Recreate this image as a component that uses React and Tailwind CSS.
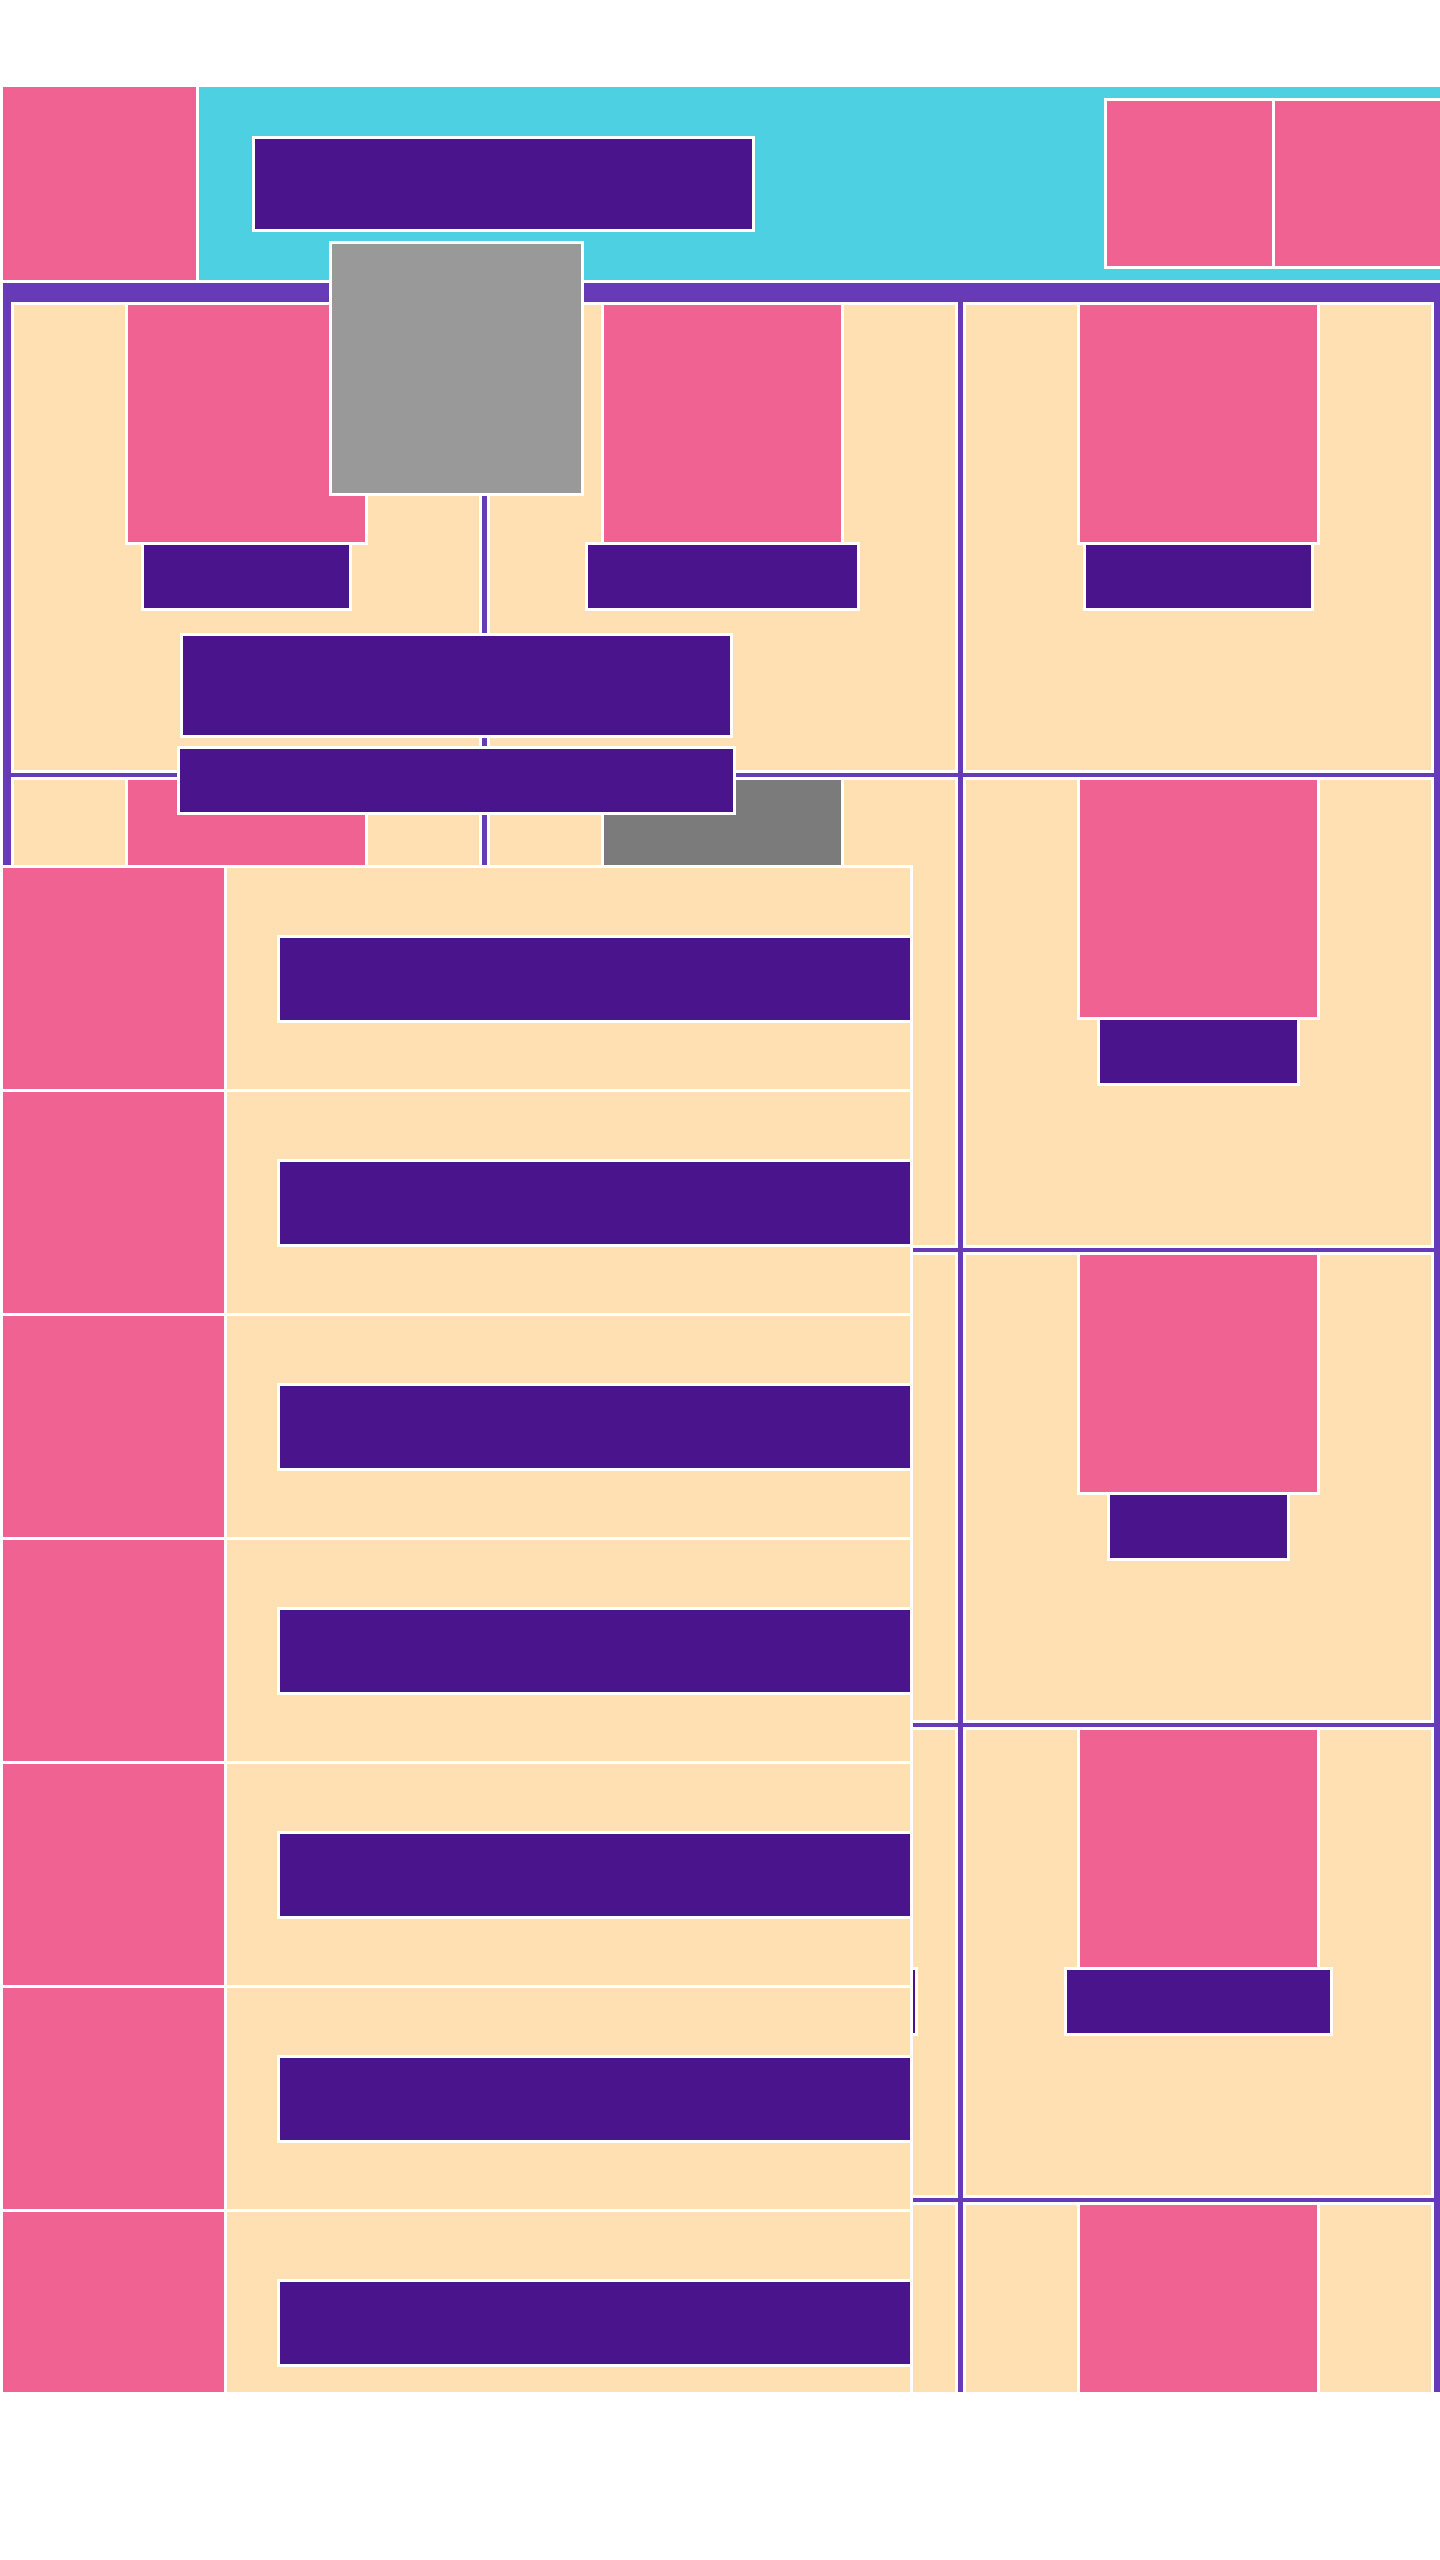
const cards = [
  { label: 211 }, { label: 275 }, { label: 231 },
  { label: 240 }, { label: 300, muted: true }, { label: 203 },
  { label: 220 }, { label: 260 }, { label: 183 },
  { label: 250 }, { label: 390 }, { label: 269 },
  { label: 230 }, { label: 250 }, { label: 240 },
]

const rows = [0, 1, 2, 3, 4, 5, 6]

const Card = ({ label, muted }) => (
  <div className="flex h-[471px] flex-col items-center border-[3px] border-white bg-[#ffe0b2]">
    <div
      className={`h-[240px] w-[243px] shrink-0 border-x-[3px] border-b-[3px] border-white ${muted ? 'bg-[#7b7b7b]' : 'bg-[#f06292]'}`}
    />
    <div
      className="-mt-[3px] h-[69px] shrink-0 border-[3px] border-white bg-[#4a148c]"
      style={{ width: label }}
    />
  </div>
)

export default function App() {
  return (
    <div className="relative h-[2392px] overflow-hidden bg-white pt-[84px]">
      {/* Header */}
      <header className="flex h-[199px] gap-[3px] bg-white p-[3px] pr-0">
        <div className="w-[193px] shrink-0 bg-[#f06292]" />
        <div className="flex flex-1 items-center bg-[#4dd0e1] pl-[53px]">
          <div className="h-[96px] w-[503px] border-[3px] border-white bg-[#4a148c]" />
          <div className="ml-auto flex h-[171px] gap-[3px] border-y-[3px] border-l-[3px] border-white bg-white">
            <div className="w-[165px] bg-[#f06292]" />
            <div className="w-[165px] bg-[#f06292]" />
          </div>
        </div>
      </header>

      {/* Card grid */}
      <main className="ml-[3px] bg-[#673ab7] pb-2 pl-2 pr-[6px] pt-[19px]">
        <div className="grid grid-cols-3 gap-x-[5px] gap-y-1">
          {cards.map((card, i) => (
            <Card key={i} {...card} />
          ))}
        </div>
      </main>

      {/* Floating preview */}
      <div className="absolute left-[329px] top-[241px] h-[255px] w-[255px] border-[3px] border-white bg-[#999999]" />
      <div className="absolute left-[180px] top-[633px] h-[105px] w-[553px] border-[3px] border-white bg-[#4a148c]" />
      <div className="absolute left-[177px] top-[746px] h-[69px] w-[559px] border-[3px] border-white bg-[#4a148c]" />

      {/* List overlay */}
      <div className="absolute left-0 top-[865px] w-[913px]">
        {rows.map((r) => (
          <div key={r} className="flex h-[224px] gap-[3px] bg-white px-[3px] pt-[3px]">
            <div className="w-[221px] shrink-0 bg-[#f06292]" />
            <div className="flex flex-1 items-center bg-[#ffe0b2] pl-[50px]">
              <div className="h-[88px] flex-1 border-y-[3px] border-l-[3px] border-white bg-[#4a148c]" />
            </div>
          </div>
        ))}
      </div>
    </div>
  )
}
